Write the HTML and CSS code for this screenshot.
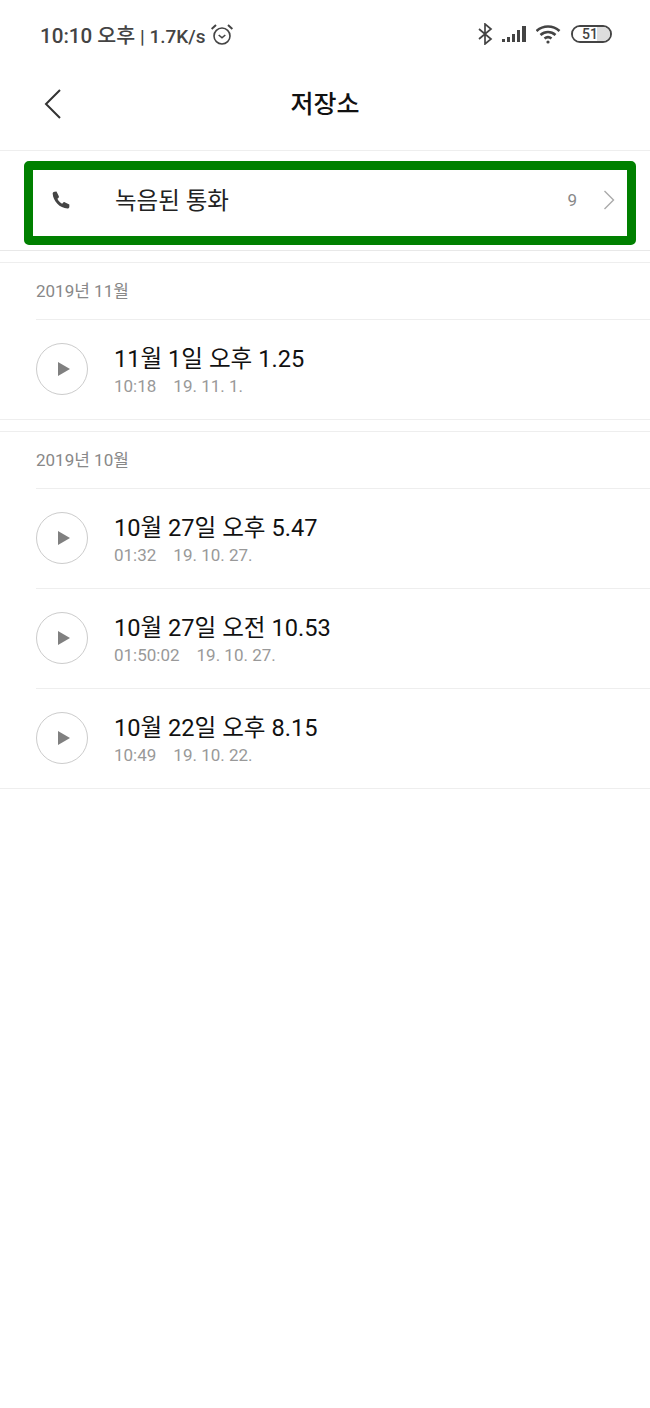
FILE: index.html
```html
<!DOCTYPE html>
<html lang="ko">
<head>
    <meta charset="UTF-8">
    <meta name="viewport" content="width=device-width, initial-scale=1.0">
    <title>저장소</title>
    <link rel="stylesheet" href="styles.css">
</head>
<body>
    <div class="status-bar">
        <div class="status-left">
            <span class="status-text"><span class="status-clock">10:10 오후</span> | 1.7K/s</span>
            <svg class="alarm-icon" width="22" height="22" viewBox="0 0 22 22" fill="none" stroke="#444" stroke-width="1.6">
                <circle cx="11" cy="13" r="8"/>
                <path d="M7.7 12 L11 14.8 L14.3 12"/>
                <path d="M0.6 6 L5 2 M21.4 6 L17 2" stroke-width="2"/>
            </svg>
        </div>
        <div class="status-right">
            <svg class="bt-icon" width="16" height="22" viewBox="0 0 16 22" fill="none" stroke="#444" stroke-width="1.7">
                <path d="M2 6 L14 16 L8 21 L8 1 L14 6 L2 16"/>
            </svg>
            <svg class="signal-icon" width="25" height="18" viewBox="0 0 25 18" fill="#444">
                <rect x="0" y="14" width="3" height="3"/>
                <rect x="5" y="12" width="3" height="5"/>
                <rect x="10" y="9" width="3" height="8"/>
                <rect x="15" y="5" width="3" height="12"/>
                <rect x="20" y="1" width="4" height="16"/>
            </svg>
            <svg class="wifi-icon" width="26" height="20" viewBox="1 0 26 20" fill="none" stroke="#444" stroke-width="2.6">
                <path d="M1.5 7 C8 1 18 1 24.5 7"/>
                <path d="M5.5 11 C10 7 16 7 20.5 11"/>
                <path d="M9.5 14.6 C11.5 13 14.5 13 16.5 14.6"/>
                <circle cx="13" cy="18" r="1.6" fill="#444" stroke="none"/>
            </svg>
            <div class="battery"><div class="battery-fill"></div><span class="battery-num">51</span></div>
        </div>
    </div>

    <div class="title-bar">
        <svg class="back-icon" width="18" height="32" viewBox="0 0 18 32" fill="none" stroke="#333" stroke-width="2">
            <path d="M16 2 L2 16 L16 30"/>
        </svg>
        <h1 class="page-title">저장소</h1>
    </div>

    <div class="call-section">
        <div class="call-row">
            <svg class="phone-icon" width="20" height="20" viewBox="0 0 24 24" fill="#444">
                <path d="M6.6 1.8 L9.4 7.6 C9.7 8.2 9.5 8.8 9.1 9.2 L7.7 10.6 C8.6 12.9 10.9 15.4 13.3 16.4 L14.8 14.9 C15.2 14.5 15.9 14.4 16.4 14.7 L22 17.4 L22 20 C22 21.3 21 22.2 19.8 22.2 C10.5 21.7 2.6 13.7 2 4.2 C2 3 3 2 4.2 2 Z"/>
            </svg>
            <span class="call-label">녹음된 통화</span>
            <span class="call-count">9</span>
            <svg class="chevron" width="12" height="20" viewBox="0 0 12 20" fill="none" stroke="#aaa" stroke-width="1.4">
                <path d="M1.5 1 L10.5 10 L1.5 19"/>
            </svg>
        </div>
    </div>

    <div class="group">
        <div class="group-head"><span class="group-title">2019년 11월</span></div>
        <div class="rec">
            <div class="play-btn"><span class="play-tri"></span></div>
            <div class="rec-info">
                <div class="rec-name">11월 1일 오후 1.25</div>
                <div class="rec-meta"><span>10:18</span><span>19. 11. 1.</span></div>
            </div>
        </div>
    </div>

    <div class="group">
        <div class="group-head"><span class="group-title">2019년 10월</span></div>
        <div class="rec">
            <div class="play-btn"><span class="play-tri"></span></div>
            <div class="rec-info">
                <div class="rec-name">10월 27일 오후 5.47</div>
                <div class="rec-meta"><span>01:32</span><span>19. 10. 27.</span></div>
            </div>
        </div>
        <div class="rec">
            <div class="play-btn"><span class="play-tri"></span></div>
            <div class="rec-info">
                <div class="rec-name">10월 27일 오전 10.53</div>
                <div class="rec-meta"><span>01:50:02</span><span>19. 10. 27.</span></div>
            </div>
        </div>
        <div class="rec">
            <div class="play-btn"><span class="play-tri"></span></div>
            <div class="rec-info">
                <div class="rec-name">10월 22일 오후 8.15</div>
                <div class="rec-meta"><span>10:49</span><span>19. 10. 22.</span></div>
            </div>
        </div>
    </div>
</body>
</html>
```

FILE: styles.css
```css
* {
    box-sizing: border-box;
}
body {
    font-family: Roboto, "Noto Sans CJK KR", sans-serif;
    background-color: #fff;
    margin: 0;
    height: 1408px;
    overflow: hidden;
}
.status-bar {
    height: 70px;
    padding: 0 38px 2px 40px;
    display: flex;
    align-items: center;
    justify-content: space-between;
}
.status-left {
    display: flex;
    align-items: center;
    gap: 5px;
}
.status-text {
    font-size: 19px;
    font-weight: 500;
    color: #444;
}
.status-clock {
    font-size: 20.6px;
}
.status-right {
    display: flex;
    align-items: center;
    gap: 9px;
}
.battery {
    width: 41px;
    height: 18px;
    border: 2px solid #444;
    border-radius: 9px;
    position: relative;
    overflow: hidden;
    display: flex;
    align-items: center;
    justify-content: center;
}
.battery-fill {
    position: absolute;
    left: 0;
    top: 0;
    bottom: 0;
    width: 100%;
    background: linear-gradient(to right, #fff 65%, #ddd 65%);
}
.battery-num {
    position: relative;
    margin-right: 3px;
    font-size: 14px;
    font-weight: 500;
    color: #444;
}
.title-bar {
    height: 81px;
    padding-left: 44px;
    display: flex;
    align-items: center;
    border-bottom: 1px solid #eee;
}
.back-icon {
    display: block;
    margin-top: -12px;
}
.page-title {
    flex: 1;
    margin: -16px 62px 0 0;
    text-align: center;
    font-size: 25px;
    font-weight: 500;
    color: #111;
}
.call-section {
    height: 100px;
    padding: 10px 14px 6px 24px;
    border-bottom: 1px solid #e8e8e8;
}
.call-row {
    height: 84px;
    border: 9px solid #008000;
    border-radius: 5px;
    padding: 0 12px 6px 18px;
    display: flex;
    align-items: center;
}
.phone-icon {
    flex-shrink: 0;
}
.call-label {
    margin: -2px 0 0 44px;
    flex: 1;
    font-size: 23.5px;
    color: #222;
}
.call-count {
    font-size: 17px;
    color: #888;
    margin-right: 26px;
}
.group {
    margin-top: 11px;
    padding-left: 36px;
    border-top: 1px solid #eee;
    border-bottom: 1px solid #eee;
}
.group-head {
    height: 57px;
    padding-bottom: 4px;
    display: flex;
    align-items: center;
    border-bottom: 1px solid #eee;
}
.group-title {
    font-size: 17px;
    color: #888;
}
.rec {
    height: 100px;
    padding-bottom: 2px;
    display: flex;
    align-items: center;
    border-bottom: 1px solid #eee;
}
.rec:last-child {
    border-bottom: none;
    height: 99px;
}
.play-btn {
    width: 52px;
    height: 52px;
    flex-shrink: 0;
    border: 1px solid #ccc;
    border-radius: 50%;
    display: flex;
    align-items: center;
    justify-content: center;
}
.play-tri {
    width: 0;
    height: 0;
    margin-left: 3px;
    border-left: 12px solid #808080;
    border-top: 7.5px solid transparent;
    border-bottom: 7.5px solid transparent;
}
.rec-info {
    margin: 2px 0 0 26px;
}
.rec-name {
    font-size: 23.6px;
    line-height: 30px;
    color: #111;
}
.rec-meta {
    display: flex;
    gap: 17px;
    margin-top: 2px;
    font-size: 17px;
    line-height: 20px;
    color: #999;
}
```
